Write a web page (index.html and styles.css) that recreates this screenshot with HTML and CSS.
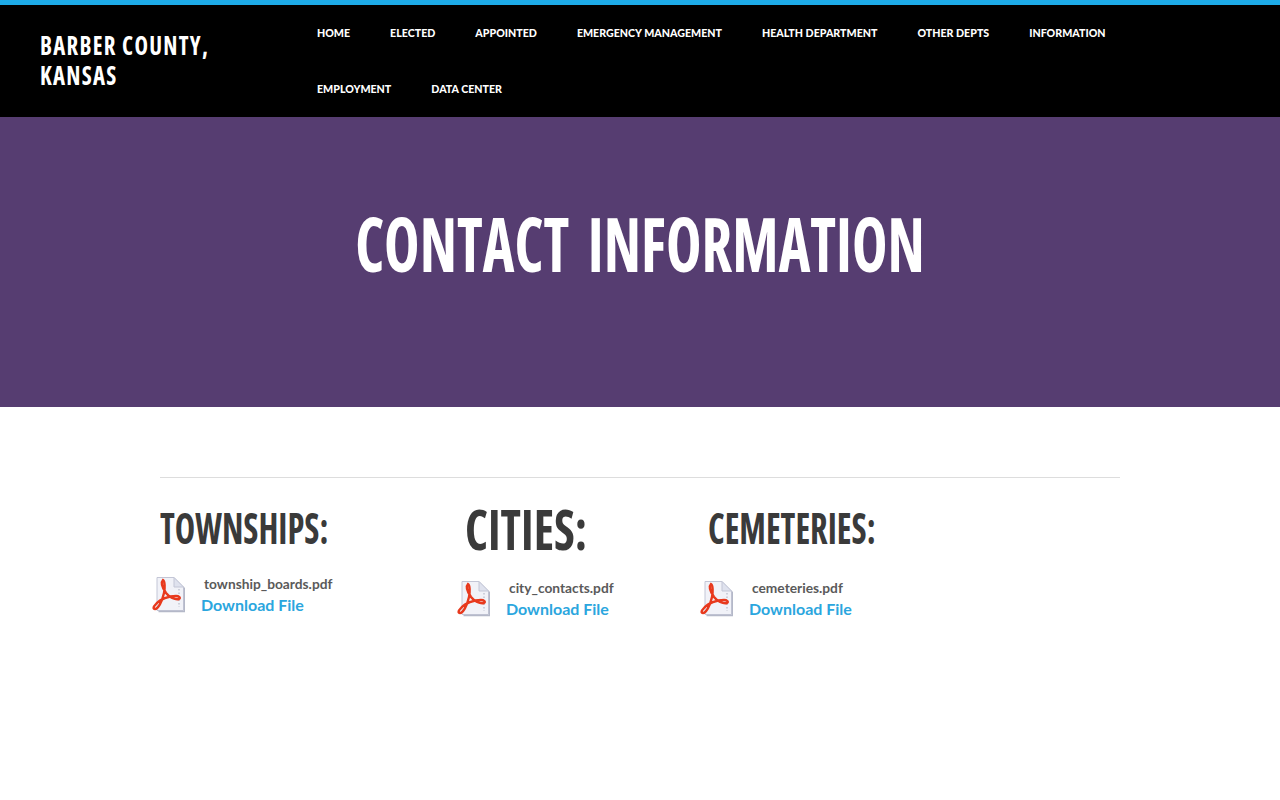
FILE: index.html
```html
<!DOCTYPE html>
<html lang="en">
<head>
    <meta charset="UTF-8">
    <meta name="viewport" content="width=device-width, initial-scale=1.0">
    <title>Contact Information - Barber County, Kansas</title>
    <link rel="stylesheet" href="styles.css">
</head>
<body>
    <svg class="icon-defs" width="0" height="0" aria-hidden="true">
        <symbol id="pdf-icon" viewBox="0 0 34 36">
            <path d="M6 .5h17l9.500 9.500v23.500h-26.500z" fill="#f1f2f8" stroke="#c3c6d6"/>
            <path d="M23 .5v9.500h9.500z" fill="#dfe2ee" stroke="#c3c6d6"/>
            <path d="M7.500 34.500h26v-24" fill="none" stroke="#b4b8c8" stroke-width="1.500"/>
            <path d="M28 12v18" stroke="#a9adbd" stroke-dasharray="1.500 2" fill="none"/>
            <path d="M12 3C10 5 11 10 15 16C18 20 24 23 28 22C30 21 28 19 25 19C18 19 9 22 5 27C2 30 2 32 4 32C7 32 11 25 13 16C14 11 14 4 12 3Z" fill="none" stroke="#e8391d" stroke-width="2.400"/>
        </symbol>
    </svg>

    <header class="site-header">
        <a class="brand" href="#">Barber County,<br>Kansas</a>
        <ul class="main-nav">
            <li><a href="#">Home</a></li>
            <li><a href="#">Elected</a></li>
            <li><a href="#">Appointed</a></li>
            <li><a href="#">Emergency Management</a></li>
            <li><a href="#">Health Department</a></li>
            <li><a href="#">Other Depts</a></li>
            <li><a href="#">Information</a></li>
            <li><a href="#">Employment</a></li>
            <li><a href="#">Data Center</a></li>
        </ul>
    </header>

    <section class="hero">
        <h1>Contact Information</h1>
    </section>

    <main class="content">
        <hr class="divider">
        <div class="columns">
            <div class="column column-townships">
                <h2>Townships:</h2>
                <div class="file">
                    <svg class="file-icon"><use href="#pdf-icon"></use></svg>
                    <div class="file-text">
                        <div class="file-name">township_boards.pdf</div>
                        <a class="file-link" href="#">Download File</a>
                    </div>
                </div>
            </div>
            <div class="column column-cities">
                <h2>Cities:</h2>
                <div class="file">
                    <svg class="file-icon"><use href="#pdf-icon"></use></svg>
                    <div class="file-text">
                        <div class="file-name">city_contacts.pdf</div>
                        <a class="file-link" href="#">Download File</a>
                    </div>
                </div>
            </div>
            <div class="column">
                <h2>Cemeteries:</h2>
                <div class="file">
                    <svg class="file-icon"><use href="#pdf-icon"></use></svg>
                    <div class="file-text">
                        <div class="file-name">cemeteries.pdf</div>
                        <a class="file-link" href="#">Download File</a>
                    </div>
                </div>
            </div>
        </div>
    </main>
</body>
</html>
```

FILE: styles.css
```css
body {
    font-family: Lato, sans-serif;
    background-color: #fff;
    margin: 0;
}
a {
    text-decoration: none;
}
.icon-defs {
    position: absolute;
}
.site-header {
    display: flex;
    align-items: center;
    background-color: #000;
    border-top: 5px solid #1dabe9;
    height: 112px;
}
/* no condensed face installed, so headings use condensed Open Sans squeezed a bit more */
.brand {
    flex: none;
    width: 217px;
    margin: 0 0 2px 40px;
    font-family: "Open Sans", sans-serif;
    font-stretch: 75%;
    font-weight: 700;
    font-size: 27px;
    line-height: 30px;
    letter-spacing: 1.5px;
    white-space: nowrap;
    text-transform: uppercase;
    color: #fff;
    transform: scaleX(0.845);
    transform-origin: left center;
}
.main-nav {
    display: flex;
    flex-wrap: wrap;
    list-style: none;
    margin: 0 0 0 40px;
    padding: 0;
    width: 880px;
}
.main-nav a {
    display: block;
    padding: 0 20px;
    font-size: 10.65px;
    font-weight: 900;
    line-height: 56px;
    text-transform: uppercase;
    color: #fff;
}
.hero {
    background-color: #563d71;
    height: 290px;
    padding-top: 86px;
    box-sizing: border-box;
    text-align: center;
}
.hero h1 {
    margin: 0;
    font-family: "Open Sans", sans-serif;
    font-stretch: 75%;
    font-weight: 700;
    font-size: 76px;
    line-height: 80px;
    word-spacing: 10px;
    text-transform: uppercase;
    color: #fff;
    transform: scaleX(0.79);
}
.content {
    width: 960px;
    margin: 0 auto;
    padding-top: 70px;
}
.divider {
    border: none;
    border-top: 1px solid #ddd;
    margin: 0;
}
.columns {
    display: grid;
    grid-template-columns: 305px 243px 1fr;
    padding-top: 25px;
}
.column h2 {
    margin: 0;
    font-family: "Open Sans", sans-serif;
    font-stretch: 75%;
    font-weight: 700;
    font-size: 42px;
    line-height: 50px;
    white-space: nowrap;
    text-transform: uppercase;
    color: #3a3a3a;
    transform: scaleX(0.82);
    transform-origin: left center;
}
.column-cities h2 {
    font-size: 56px;
    transform: scaleX(0.85);
}
.file {
    display: flex;
    margin: 27px 0 0 -9px;
}
.column-townships .file {
    margin-top: 23px;
}
.file-icon {
    width: 34px;
    height: 36px;
    flex: none;
    margin-top: 1px;
}
.file-text {
    margin-left: 16px;
}
.file-name {
    padding-left: 3px;
    font-size: 13.75px;
    font-weight: bold;
    line-height: 16px;
    color: #5a5a5a;
}
.file-link {
    display: block;
    font-size: 16px;
    font-weight: bold;
    line-height: 26px;
    color: #2ba6de;
}
```
